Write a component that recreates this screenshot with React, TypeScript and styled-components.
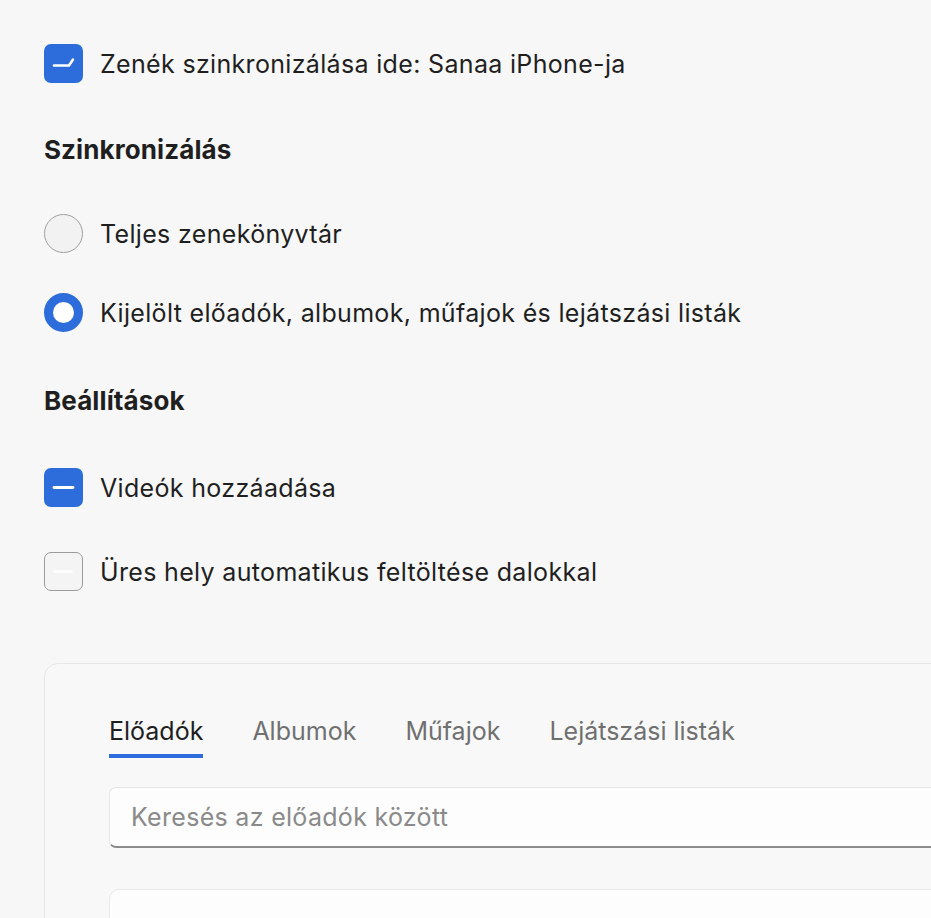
import React, { useState } from "react";
import styled, { createGlobalStyle } from "styled-components";

const GlobalStyle = createGlobalStyle`
  html, body {
    margin: 0;
    padding: 0;
    background: #f7f7f7;
    overflow: hidden;
  }
  body {
    font-family: "Inter", "Liberation Sans", sans-serif;
    color: #1f1f1f;
  }
`;

const Page = styled.div`
  width: 931px;
  height: 918px;
  overflow: hidden;
  padding: 44px 0 0 44px;
  box-sizing: border-box;
  display: flex;
  flex-direction: column;
`;

const Row = styled.label<{ $top?: number }>`
  display: flex;
  align-items: center;
  gap: 17px;
  height: 39px;
  margin-top: ${({ $top = 0 }) => $top}px;
  font-size: 25px;
  letter-spacing: 0.33px;
  color: #1f1f1f;
  cursor: default;
`;

const Heading = styled.h2<{ $top: number }>`
  margin: ${({ $top }) => $top}px 0 0 0;
  height: 36px;
  line-height: 36px;
  font-size: 26px;
  font-weight: 700;
  letter-spacing: 0.1px;
  color: #1f1f1f;
`;

const Box = styled.span<{ $checked: boolean }>`
  flex: none;
  width: 39px;
  height: 39px;
  border-radius: 7px;
  box-sizing: border-box;
  display: flex;
  align-items: center;
  justify-content: center;
  background: ${({ $checked }) => ($checked ? "#2d6ddb" : "#f4f4f4")};
  border: ${({ $checked }) => ($checked ? "none" : "1.5px solid #9b9b9b")};
`;

const Radio = styled.span<{ $checked: boolean }>`
  flex: none;
  width: 39px;
  height: 39px;
  border-radius: 50%;
  box-sizing: border-box;
  background: ${({ $checked }) => ($checked ? "#ffffff" : "#f2f2f2")};
  border: ${({ $checked }) => ($checked ? "9.5px solid #2d6ddb" : "1.5px solid #a0a0a0")};
`;

const Panel = styled.div`
  margin-top: 72px;
  width: 1000px;
  height: 400px;
  flex: none;
  border: 1.5px solid #e6e6e6;
  border-radius: 14px;
  background: #f8f8f8;
  padding: 44px 0 0 64px;
  box-sizing: border-box;
  display: flex;
  flex-direction: column;
`;

const Tabs = styled.div`
  display: flex;
  gap: 49px;
`;

const Tab = styled.button<{ $active: boolean }>`
  all: unset;
  font-family: "Inter", "Liberation Sans", sans-serif;
  font-size: 25px;
  letter-spacing: 0px;
  height: 50px;
  line-height: 42px;
  box-sizing: border-box;
  color: ${({ $active }) => ($active ? "#1f1f1f" : "#707070")};
  border-bottom: 4px solid ${({ $active }) => ($active ? "#2d6ddb" : "transparent")};
`;

const Search = styled.input`
  margin-top: 29px;
  height: 61px;
  width: 900px;
  flex: none;
  box-sizing: border-box;
  border: 1px solid #e6e6e6;
  border-bottom: 2.5px solid #8c8c8c;
  border-radius: 7px;
  background: #fdfdfd;
  padding: 0 21px;
  font-family: "Inter", "Liberation Sans", sans-serif;
  font-size: 25px;
  letter-spacing: 0.3px;
  color: #1f1f1f;
  outline: none;
  &::placeholder {
    color: #8a8a8a;
  }
`;

const List = styled.div`
  margin-top: 41px;
  height: 200px;
  width: 900px;
  flex: none;
  border: 1.5px solid #e8e8e8;
  border-radius: 10px;
  background: #fdfdfd;
`;

const CheckMark = ({ kind }: { kind: "tick" | "dash" | "faint" }) => (
  <svg width="39" height="39" viewBox="0 0 39 39" fill="none">
    {kind === "tick" && (
      <path d="M10 21.5H25L29 15.5" stroke="#fff" strokeWidth="2.6" strokeLinecap="round" strokeLinejoin="round" />
    )}
    {kind === "dash" && (
      <path d="M10 19.5H29" stroke="#fff" strokeWidth="2.8" strokeLinecap="round" />
    )}
    {kind === "faint" && (
      <path d="M10 19.5H28" stroke="#ffffff" strokeWidth="2.4" strokeLinecap="round" />
    )}
  </svg>
);

const tabs = ["Előadók", "Albumok", "Műfajok", "Lejátszási listák"];

export default function App() {
  const [tab, setTab] = useState(0);
  const [mode, setMode] = useState(1);

  return (
    <>
      <GlobalStyle />
      <Page>
        <Row>
          <Box $checked>
            <CheckMark kind="tick" />
          </Box>
          Zenék szinkronizálása ide: Sanaa iPhone-ja
        </Row>

        <Heading $top={49}>Szinkronizálás</Heading>

        <Row $top={46} onClick={() => setMode(0)}>
          <Radio $checked={mode === 0} />
          Teljes zenekönyvtár
        </Row>
        <Row $top={40} onClick={() => setMode(1)}>
          <Radio $checked={mode === 1} />
          Kijelölt előadók, albumok, műfajok és lejátszási listák
        </Row>

        <Heading $top={51}>Beállítások</Heading>

        <Row $top={49}>
          <Box $checked>
            <CheckMark kind="dash" />
          </Box>
          Videók hozzáadása
        </Row>
        <Row $top={45}>
          <Box $checked={false}>
            <CheckMark kind="faint" />
          </Box>
          Üres hely automatikus feltöltése dalokkal
        </Row>

        <Panel>
          <Tabs>
            {tabs.map((t, i) => (
              <Tab key={t} $active={tab === i} onClick={() => setTab(i)}>
                {t}
              </Tab>
            ))}
          </Tabs>
          <Search placeholder="Keresés az előadók között" />
          <List />
        </Panel>
      </Page>
    </>
  );
}
